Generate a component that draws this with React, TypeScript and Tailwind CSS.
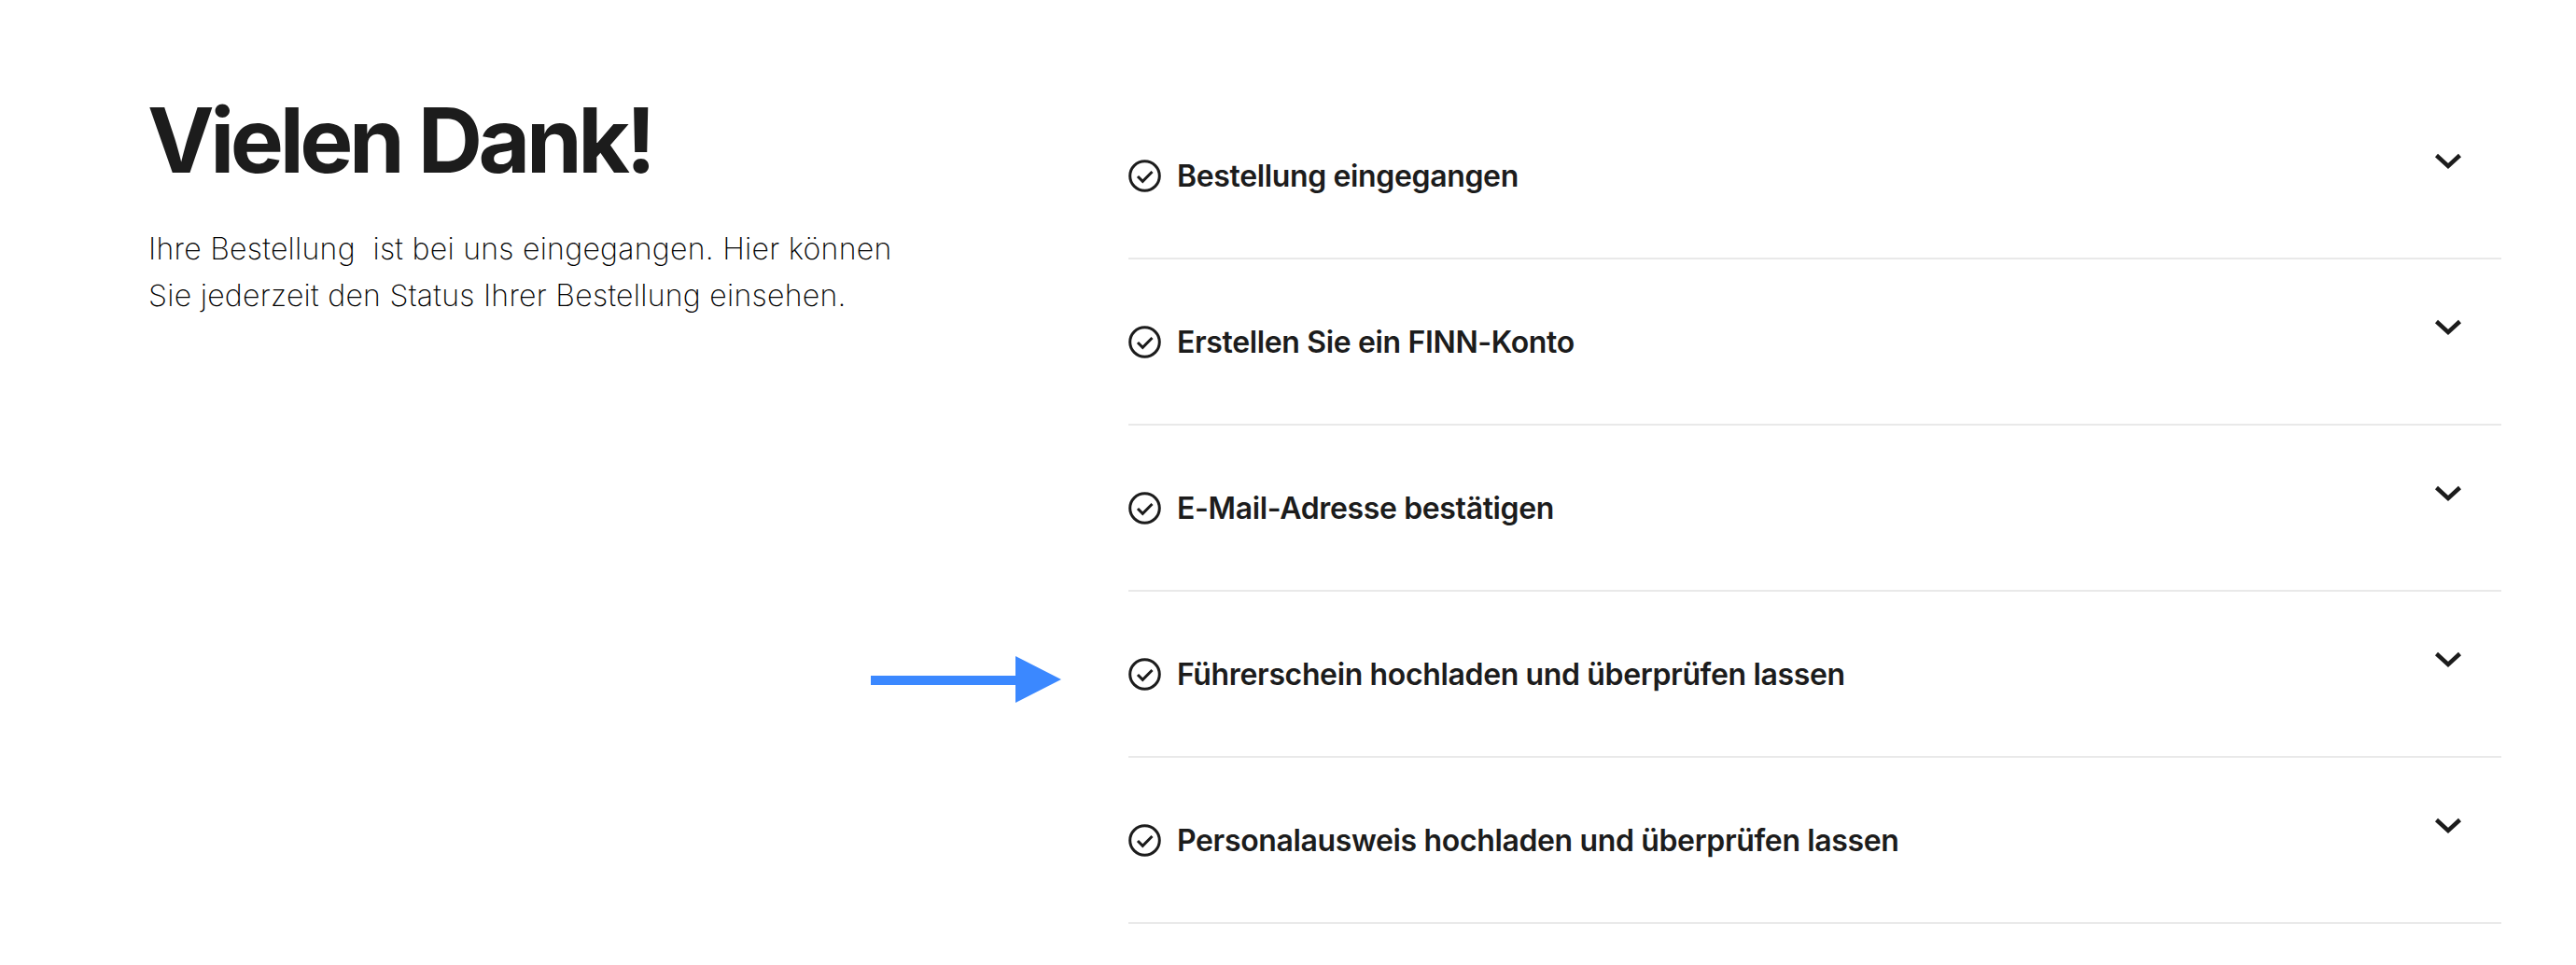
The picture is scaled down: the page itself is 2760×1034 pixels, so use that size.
const steps = [
  "Bestellung eingegangen",
  "Erstellen Sie ein FINN-Konto",
  "E-Mail-Adresse bestätigen",
  "Führerschein hochladen und überprüfen lassen",
  "Personalausweis hochladen und überprüfen lassen",
];

function CheckIcon() {
  return (
    <svg width="35" height="35" viewBox="0 0 35 35" fill="none" stroke="#1c1c1c" className="shrink-0">
      <circle cx="17.500" cy="17.500" r="15.800" strokeWidth="3" />
      <path d="M10 18l5.300 5.300L25.500 13" strokeWidth="3" />
    </svg>
  );
}

function Chevron() {
  return (
    <svg width="30" height="20" viewBox="0 0 30 20" fill="none" stroke="#1c1c1c" className="shrink-0">
      <path d="M2.500 3.500L15 15l12.500-11.500" strokeWidth="4.500" />
    </svg>
  );
}

export default function App() {
  return (
    <div className="relative h-[1034px] w-[2760px] overflow-hidden bg-white pl-[159px] pr-[80px] font-['Inter',sans-serif] text-[#1c1c1c]">
      <div className="flex items-start">
        {/* Linke Spalte */}
        <div className="w-[1050px] shrink-0 pt-[90px]">
          <h1 className="-ml-[1px] text-[96px] font-bold leading-[120px] tracking-[-0.046em]">Vielen Dank!</h1>
          <p className="mt-[32px] whitespace-pre-line text-[32px] font-extralight leading-[50px] tracking-[0.28px] text-black">
            {"Ihre Bestellung\u00a0 ist bei uns eingegangen. Hier können\nSie jederzeit den Status Ihrer Bestellung einsehen."}
          </p>
        </div>

        {/* Schritte */}
        <div className="flex-1 pt-[100px]">
          {steps.map((step) => (
            <div key={step} className="flex h-[178px] justify-between border-b-2 border-[#e9e9e9] pr-[42px]">
              <div className="flex h-[176px] items-start gap-[17px] pt-[71px]">
                <CheckIcon />
                <span className="pt-[1px] text-[32px] font-semibold leading-[34px] tracking-[-0.36px]">{step}</span>
              </div>
              <div className="pt-[63px]">
                <Chevron />
              </div>
            </div>
          ))}
        </div>
      </div>

      {/* Pfeil */}
      <svg width="206" height="50" viewBox="0 0 206 50" className="absolute left-[933px] top-[703px]">
        <path d="M0 21h155V0l49 25-49 25V31H0z" fill="#3b88ff" />
      </svg>
    </div>
  );
}
